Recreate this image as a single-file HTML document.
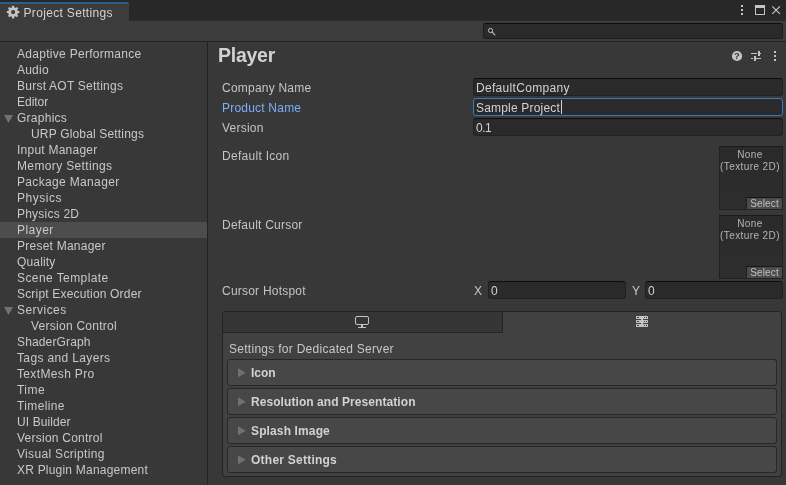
<!DOCTYPE html>
<html>
<head>
<meta charset="utf-8">
<title>Project Settings</title>
<style>
html,body{margin:0;padding:0;}
body{width:786px;height:485px;overflow:hidden;background:#383838;position:relative;will-change:transform;
  font-family:"Liberation Sans",sans-serif;font-size:12px;color:#c8c8c8;}
.abs{position:absolute;}
#titlebar{left:0;top:0;width:786px;height:21px;background:#282828;}
#topedge{left:0;top:0;width:786px;height:2px;background:#272727;}
#tab{left:0;top:2px;width:129px;border-radius:0 2px 0 0;height:19px;background:#3c3c3c;}
#tabline{left:0;top:2px;width:129px;border-radius:0 2px 0 0;height:2px;background:#2c5d87;}
#toolbar{left:0;top:21px;width:786px;height:20px;background:#3c3c3c;border-bottom:1px solid #232323;}
#tbedge{left:129px;top:20px;width:657px;height:1px;background:#2d2d2d;}
#search{left:483px;top:23px;width:298px;height:14px;background:#2a2a2a;border:1px solid #1f1f1f;border-top-color:#0d0d0d;border-radius:3px;}
#sidebar{left:0;top:42px;width:207px;height:443px;background:#383838;}
#splitter{left:207px;top:42px;width:1px;height:443px;background:#232323;}
.row{position:absolute;left:0;width:207px;height:16px;line-height:16px;white-space:nowrap;}
.row span{position:absolute;top:0;}
.l0 span{left:17px;}
.l1 span{left:31px;}
.sel{background:#4d4d4d;}
#heading{left:218px;top:43px;font-size:19.5px;letter-spacing:-0.25px;font-weight:bold;line-height:24px;color:#d2d2d2;white-space:nowrap;}
.lbl{position:absolute;left:222px;height:18px;line-height:18px;white-space:nowrap;color:#c4c4c4;}
.fld{position:absolute;box-sizing:border-box;height:18px;background:#2a2a2a;border:1px solid #212121;border-top-color:#0d0d0d;border-radius:3px;line-height:16px;white-space:nowrap;color:#d2d2d2;}
.fld span{position:absolute;left:2px;top:1px;}
.focus{border-color:#3a79bb;}
.tex{position:absolute;left:719px;width:64px;height:64px;box-sizing:border-box;background:linear-gradient(#2a2a2a,#2e2e2e);border:1px solid #212121;border-top-color:#1a1a1a;}
.tex .t{position:absolute;left:-2px;width:64px;text-align:center;font-size:10px;line-height:12px;color:#b4b4b4;top:2.4px;letter-spacing:0.4px;white-space:nowrap;}
.tex .b{position:absolute;right:0;bottom:0;width:35px;height:11px;background:#4b4b4b;border-left:1px solid #1e1e1e;border-top:1px solid #161616;font-size:10px;line-height:11px;text-align:center;color:#c0c0c0;letter-spacing:0.15px;}
#box{left:222px;top:311px;width:560px;height:166px;box-sizing:border-box;background:#414141;border:1px solid #232323;border-radius:3px;}
#tab1{left:223px;top:312px;width:279px;height:20px;background:#353535;border-right:1px solid #232323;border-bottom:1px solid #232323;}
.sec{position:absolute;left:227px;width:550px;height:27px;box-sizing:border-box;background:#474747;border:1px solid #272727;border-radius:3px;line-height:24px;font-weight:bold;color:#d2d2d2;}
.sec span{position:absolute;left:23px;top:1px;white-space:nowrap;}
</style>
</head>
<body>
<div id="titlebar" class="abs"></div>
<div id="topedge" class="abs"></div>
<div id="tab" class="abs"></div>
<div id="tabline" class="abs"></div>
<span class="abs" id="title" style="left:23.5px;top:5px;line-height:16px;white-space:nowrap;color:#d2d2d2;letter-spacing:0.33px">Project Settings</span>
<div id="toolbar" class="abs"></div>
<div id="tbedge" class="abs"></div>
<div id="search" class="abs"></div>

<div id="sidebar" class="abs"></div>
<div id="splitter" class="abs"></div>
<div id="rows">
<div class="row l0" style="top:46px"><span style="letter-spacing:0.29px">Adaptive Performance</span></div>
<div class="row l0" style="top:62px"><span style="letter-spacing:0.22px">Audio</span></div>
<div class="row l0" style="top:78px"><span style="letter-spacing:0.24px">Burst AOT Settings</span></div>
<div class="row l0" style="top:94px"><span style="letter-spacing:-0.02px">Editor</span></div>
<div class="row l0" style="top:110px"><span style="letter-spacing:0.26px">Graphics</span></div>
<div class="row l1" style="top:126px"><span style="letter-spacing:0.17px">URP Global Settings</span></div>
<div class="row l0" style="top:142px"><span style="letter-spacing:0.24px">Input Manager</span></div>
<div class="row l0" style="top:158px"><span style="letter-spacing:0.36px">Memory Settings</span></div>
<div class="row l0" style="top:174px"><span style="letter-spacing:0.34px">Package Manager</span></div>
<div class="row l0" style="top:190px"><span style="letter-spacing:0.52px">Physics</span></div>
<div class="row l0" style="top:206px"><span style="letter-spacing:0.22px">Physics 2D</span></div>
<div class="row l0 sel" style="top:222px"><span style="letter-spacing:0.46px">Player</span></div>
<div class="row l0" style="top:238px"><span style="letter-spacing:0.24px">Preset Manager</span></div>
<div class="row l0" style="top:254px"><span style="letter-spacing:0.17px">Quality</span></div>
<div class="row l0" style="top:270px"><span style="letter-spacing:0.42px">Scene Template</span></div>
<div class="row l0" style="top:286px"><span style="letter-spacing:0.18px">Script Execution Order</span></div>
<div class="row l0" style="top:302px"><span style="letter-spacing:0.46px">Services</span></div>
<div class="row l1" style="top:318px"><span style="letter-spacing:0.26px">Version Control</span></div>
<div class="row l0" style="top:334px"><span style="letter-spacing:0.14px">ShaderGraph</span></div>
<div class="row l0" style="top:350px"><span style="letter-spacing:0.36px">Tags and Layers</span></div>
<div class="row l0" style="top:366px"><span style="letter-spacing:0.35px">TextMesh Pro</span></div>
<div class="row l0" style="top:382px"><span style="letter-spacing:0.47px">Time</span></div>
<div class="row l0" style="top:398px"><span style="letter-spacing:0.37px">Timeline</span></div>
<div class="row l0" style="top:414px"><span style="letter-spacing:0.1px">UI Builder</span></div>
<div class="row l0" style="top:430px"><span style="letter-spacing:0.24px">Version Control</span></div>
<div class="row l0" style="top:446px"><span style="letter-spacing:0.33px">Visual Scripting</span></div>
<div class="row l0" style="top:462px"><span style="letter-spacing:0.21px">XR Plugin Management</span></div>
</div>

<div id="heading" class="abs">Player</div>

<div class="lbl" style="top:79px"><span style="letter-spacing:0.22px">Company Name</span></div>
<div class="lbl" style="top:99px;color:#7baefa"><span style="letter-spacing:0.21px">Product Name</span></div>
<div class="lbl" style="top:119px"><span style="letter-spacing:0.23px">Version</span></div>
<div class="lbl" style="top:147px"><span style="letter-spacing:0.29px">Default Icon</span></div>
<div class="lbl" style="top:216px"><span style="letter-spacing:0.23px">Default Cursor</span></div>
<div class="lbl" style="top:282px"><span style="letter-spacing:0.22px">Cursor Hotspot</span></div>

<div class="fld" style="left:473px;top:78px;width:310px"><span style="letter-spacing:0.31px">DefaultCompany</span></div>
<div class="fld focus" style="left:473px;top:98px;width:310px"><span style="letter-spacing:0.19px">Sample Project</span></div>
<div class="fld" style="left:473px;top:118px;width:310px"><span style="letter-spacing:-0.45px">0.1</span></div>

<div class="tex" style="top:146px"><div class="t">None<br>(Texture 2D)</div><div class="b">Select</div></div>
<div class="tex" style="top:215px"><div class="t">None<br>(Texture 2D)</div><div class="b">Select</div></div>

<span class="abs" style="left:474px;top:282px;line-height:18px">X</span>
<div class="fld" style="left:488px;top:281px;width:138px"><span>0</span></div>
<span class="abs" style="left:632px;top:282px;line-height:18px">Y</span>
<div class="fld" style="left:645px;top:281px;width:138px"><span>0</span></div>

<div id="box" class="abs"></div>
<div id="tab1" class="abs"></div>
<span class="abs" style="left:229px;top:340px;line-height:18px;white-space:nowrap;letter-spacing:0.28px">Settings for Dedicated Server</span>
<div class="sec" style="top:359px"><span style="letter-spacing:-0.05px">Icon</span></div>
<div class="sec" style="top:388px"><span style="letter-spacing:0.07px">Resolution and Presentation</span></div>
<div class="sec" style="top:417px"><span style="letter-spacing:0.13px">Splash Image</span></div>
<div class="sec" style="top:446px"><span style="letter-spacing:0.24px">Other Settings</span></div>
<svg class="abs" style="left:0;top:0;pointer-events:none" width="786" height="485" viewBox="0 0 786 485" id="icons">
<!-- gear -->
<path fill="#c4c4c4" fill-rule="evenodd" transform="translate(13.1 12.1)" d="M4.76 -1.14 L6.32 -1.00 L6.32 1.00 L4.76 1.14 L4.18 2.56 L5.18 3.76 L3.76 5.18 L2.56 4.18 L1.14 4.76 L1.00 6.32 L-1.00 6.32 L-1.14 4.76 L-2.56 4.18 L-3.76 5.18 L-5.18 3.76 L-4.18 2.56 L-4.76 1.14 L-6.32 1.00 L-6.32 -1.00 L-4.76 -1.14 L-4.18 -2.56 L-5.18 -3.76 L-3.76 -5.18 L-2.56 -4.18 L-1.14 -4.76 L-1.00 -6.32 L1.00 -6.32 L1.14 -4.76 L2.56 -4.18 L3.76 -5.18 L5.18 -3.76 L4.18 -2.56 Z M2.10 0 A2.10 2.10 0 1 0 -2.10 0 A2.10 2.10 0 1 0 2.10 0 Z"/>
<!-- window buttons -->
<g fill="#c4c4c4">
<rect x="741" y="5" width="2" height="2"/><rect x="741" y="9" width="2" height="2"/><rect x="741" y="13" width="2" height="2"/>
<path fill-rule="evenodd" d="M755 5h10v10h-10z M756 8v6h8v-6z"/>
</g>
<path d="M772.3 6.3l7.6 7.6M779.9 6.3l-7.6 7.6" stroke="#c4c4c4" stroke-width="1.2" fill="none"/>
<!-- search -->
<circle cx="490.5" cy="30.5" r="2.1" fill="none" stroke="#c4c4c4" stroke-width="1"/>
<path d="M492.2 32.2L494.8 34.8" stroke="#c4c4c4" stroke-width="1.2" stroke-linecap="round"/>
<!-- help -->
<circle cx="737" cy="56" r="5.1" fill="#c4c4c4"/>
<text x="737" y="59.2" font-family="Liberation Sans, sans-serif" font-weight="bold" font-size="9.5" text-anchor="middle" fill="#383838">?</text>
<!-- preset -->
<g fill="#c4c4c4">
<rect x="751" y="53" width="6" height="1"/><rect x="758" y="51" width="2" height="5"/><rect x="760" y="53" width="1" height="1"/>
<rect x="751" y="58" width="2" height="1"/><rect x="754" y="56" width="2" height="5"/><rect x="756" y="58" width="5" height="1"/>
<!-- kebab -->
<rect x="774" y="51" width="2" height="2"/><rect x="774" y="55" width="2" height="2"/><rect x="774" y="59" width="2" height="2"/>
</g>
<!-- monitor -->
<rect x="355.5" y="316.5" width="13" height="8" rx="1.5" fill="none" stroke="#c4c4c4" stroke-width="1"/>
<rect x="361" y="325" width="2" height="2" fill="#c4c4c4"/>
<rect x="358" y="327" width="8" height="1" fill="#c4c4c4"/>
<!-- server -->
<g fill="#c4c4c4">
<rect x="636" y="316" width="12" height="3" rx="0.5"/><rect x="636" y="320" width="12" height="3" rx="0.5"/><rect x="636" y="324" width="12" height="3" rx="0.5"/>
<rect x="641" y="319" width="2" height="5"/>
</g>
<g fill="#414141">
<rect x="637" y="317" width="2" height="1"/><rect x="644" y="317" width="1" height="1"/><rect x="646" y="317" width="1" height="1"/>
<rect x="637" y="321" width="2" height="1"/><rect x="644" y="321" width="1" height="1"/><rect x="646" y="321" width="1" height="1"/>
<rect x="637" y="325" width="2" height="1"/><rect x="644" y="325" width="1" height="1"/><rect x="646" y="325" width="1" height="1"/>
</g>
<!-- arrows -->
<g fill="#717171">
<polygon points="4,115 13,115 8.5,123"/>
<polygon points="4,307 13,307 8.5,315"/>
<polygon points="238,368.2 238,377.2 245.8,372.7"/>
<polygon points="238,397.2 238,406.2 245.8,401.7"/>
<polygon points="238,426.2 238,435.2 245.8,430.7"/>
<polygon points="238,455.2 238,464.2 245.8,459.7"/>
</g>
<!-- text cursor -->
<rect x="561" y="100" width="1" height="14" fill="#d2d2d2"/>
</svg>
</body>
</html>
